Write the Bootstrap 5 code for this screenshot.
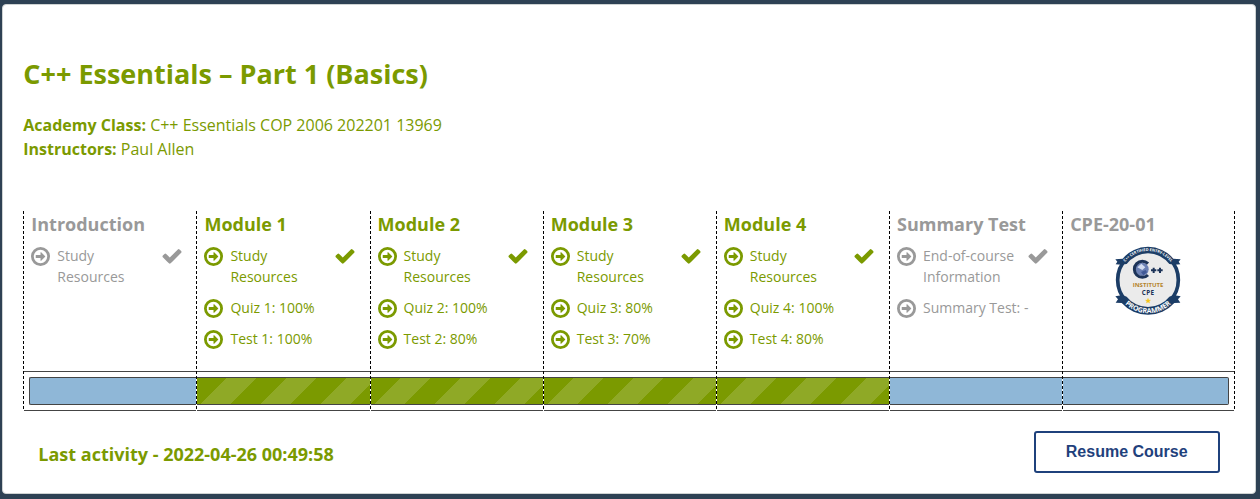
<!DOCTYPE html>
<html lang="en">
<head>
<meta charset="utf-8">
<meta name="viewport" content="width=device-width, initial-scale=1">
<title>C++ Essentials – Part 1 (Basics)</title>
<link href="https://cdn.jsdelivr.net/npm/bootstrap@5.3.0/dist/css/bootstrap.min.css" rel="stylesheet">
<style>
  :root { --olive: #7b9a00; --muted: #999; --navy: #1f417c; }
  body { background: #2e4154; font-family: "Open Sans", "Noto Sans", sans-serif; color: var(--olive); height: 499px; overflow: hidden; padding: 4px 4px 5px 2px; }
  .course { height: 490px; border: 1px solid #cfd3d3; border-radius: 4px; color: inherit; padding: 0 20.3px; }
  .course-title { font-size: 27px; font-weight: 700; line-height: 36px; margin: 51px 0 21px; }
  .meta { font-size: 16px; line-height: 24px; }
  .track { margin-top: 50px; height: 200px; width: 1212px; display: grid; grid-template-columns: repeat(7, 1fr); }
  .module { display: flex; flex-direction: column; min-width: 0; position: relative; }
  .module::before, .module:last-child::after { content: ""; position: absolute; top: 0; bottom: 0; width: 1px; left: 0; background: repeating-linear-gradient(#000 0 3px, #fff 3px 5px); }
  .module:last-child::after { left: auto; right: 0; }
  .module h2 { font-size: 18px; font-weight: 700; line-height: 26px; margin: 0 0 8px; padding-left: 8px; white-space: nowrap; }
  .pending { color: var(--muted); }
  .step { font-size: 14px; line-height: 21px; padding-left: 8px; margin-bottom: 10px; }
  .step .ring { width: 19px; height: 19px; margin: 2px 7px 0 0; flex: none; }
  .step .label { width: 101px; white-space: nowrap; }
  .step .tick { width: 22px; height: 22px; margin: 0 0 0 2.5px; flex: none; }
  .meter { margin-top: auto; height: 40px; border-top: 1px solid #444; border-bottom: 1px solid #444; padding: 5px 0; }
  .fill { height: 28px; background: #8fb7d7; border: 1px solid #444; border-width: 1px 0; }
  .module:first-child .fill { margin-left: 6px; border-left-width: 1px; border-radius: 2px 0 0 2px; }
  .module:last-child .fill { margin-right: 6px; border-right-width: 1px; border-radius: 0 2px 2px 0; }
  .fill.done { background: linear-gradient(135deg, transparent 25%, rgba(255,255,255,.15) 25% 50%, transparent 50% 75%, rgba(255,255,255,.15) 75%) 1px 0 / 60px 60px var(--olive); }
  .seal { display: block; width: 72px; height: 72px; margin: -1px 0 0 50px; }
  .course-foot { margin-top: 20px; padding: 0 15px; }
  .last { font-size: 18px; font-weight: 700; line-height: 26px; padding-top: 4px; }
  .resume { font-family: "Liberation Sans", Arial, sans-serif; font-size: 16px; font-weight: 700; width: 186px; height: 42px; border: 2px solid var(--navy); color: var(--navy); border-radius: 3px; padding: 0; }
</style>
</head>
<body>
<svg class="d-none">
  <symbol id="go" viewBox="0 0 1536 1536"><circle cx="768" cy="768" r="656" fill="none" stroke="currentColor" stroke-width="224"/><path fill="currentColor" d="M1152 768q0 14-9 23l-320 320q-9 9-23 9-13 0-22.500-9.500t-9.500-22.500v-192h-352q-13 0-22.500-9.500t-9.500-22.500v-192q0-13 9.500-22.500t22.500-9.500h352v-192q0-14 9-23t23-9q12 0 24 10l319 319q9 9 9 23z"/></symbol>
  <symbol id="tick" viewBox="0 0 1792 1792"><path fill="currentColor" d="M1671 566q0 40-28 68l-724 724-136 136q-28 28-68 28t-68-28l-136-136-362-362q-28-28-28-68t28-68l136-136q28-28 68-28t68 28l294 295 656-657q28-28 68-28t68 28l136 136q28 28 28 68z"/></symbol>
</svg>
<main class="card course">
  <h1 class="course-title">C++ Essentials – Part 1 (Basics)</h1>
  <div class="meta"><b>Academy Class:</b> C++ Essentials COP 2006 202201 13969</div>
  <div class="meta"><b>Instructors:</b> Paul Allen</div>
  <section class="track">
    <div class="module pending"><h2>Introduction</h2>
      <div class="step d-flex"><svg class="ring"><use href="#go"/></svg><span class="label">Study<br>Resources</span><svg class="tick"><use href="#tick"/></svg></div>
      <div class="meter"><div class="fill"></div></div></div>
    <div class="module"><h2>Module 1</h2>
      <div class="step d-flex"><svg class="ring"><use href="#go"/></svg><span class="label">Study<br>Resources</span><svg class="tick"><use href="#tick"/></svg></div>
      <div class="step d-flex"><svg class="ring"><use href="#go"/></svg><span class="label">Quiz 1: 100%</span></div>
      <div class="step d-flex"><svg class="ring"><use href="#go"/></svg><span class="label">Test 1: 100%</span></div>
      <div class="meter"><div class="fill done"></div></div></div>
    <div class="module"><h2>Module 2</h2>
      <div class="step d-flex"><svg class="ring"><use href="#go"/></svg><span class="label">Study<br>Resources</span><svg class="tick"><use href="#tick"/></svg></div>
      <div class="step d-flex"><svg class="ring"><use href="#go"/></svg><span class="label">Quiz 2: 100%</span></div>
      <div class="step d-flex"><svg class="ring"><use href="#go"/></svg><span class="label">Test 2: 80%</span></div>
      <div class="meter"><div class="fill done"></div></div></div>
    <div class="module"><h2>Module 3</h2>
      <div class="step d-flex"><svg class="ring"><use href="#go"/></svg><span class="label">Study<br>Resources</span><svg class="tick"><use href="#tick"/></svg></div>
      <div class="step d-flex"><svg class="ring"><use href="#go"/></svg><span class="label">Quiz 3: 80%</span></div>
      <div class="step d-flex"><svg class="ring"><use href="#go"/></svg><span class="label">Test 3: 70%</span></div>
      <div class="meter"><div class="fill done"></div></div></div>
    <div class="module"><h2>Module 4</h2>
      <div class="step d-flex"><svg class="ring"><use href="#go"/></svg><span class="label">Study<br>Resources</span><svg class="tick"><use href="#tick"/></svg></div>
      <div class="step d-flex"><svg class="ring"><use href="#go"/></svg><span class="label">Quiz 4: 100%</span></div>
      <div class="step d-flex"><svg class="ring"><use href="#go"/></svg><span class="label">Test 4: 80%</span></div>
      <div class="meter"><div class="fill done"></div></div></div>
    <div class="module pending"><h2>Summary Test</h2>
      <div class="step d-flex"><svg class="ring"><use href="#go"/></svg><span class="label">End-of-course<br>Information</span><svg class="tick"><use href="#tick"/></svg></div>
      <div class="step d-flex"><svg class="ring"><use href="#go"/></svg><span class="label">Summary Test: -</span></div>
      <div class="meter"><div class="fill"></div></div></div>
    <div class="module pending"><h2>CPE-20-01</h2>
      <svg class="seal" viewBox="0 0 216 216" font-family="Open Sans, sans-serif" font-weight="700">
        <circle cx="108" cy="108" r="91" fill="#ebebeb" stroke="#1c3d66" stroke-width="11"/>
        <!-- ribbon tails and bands -->
        <path fill="#1c3d66" d="M10 46L32 44A99 99 0 0 1 184 44L206 46L200 53L205 61L188 62L172 60A80 80 0 0 0 44 60L28 62L11 61L16 53Z"/>
        <path fill="#1c3d66" d="M10 157L32 153L44 158A81 81 0 0 0 172 158L184 153L206 157L198 166L205 176L187 177A106 106 0 0 1 29 177L11 176L18 166Z"/>
        <path id="seal-top" fill="none" d="M36 59A87 87 0 0 1 180 59"/>
        <path id="seal-bottom" fill="none" d="M31 171A99 99 0 0 0 185 171"/>
        <text font-size="11.500" fill="#fff"><textPath href="#seal-top" startOffset="50%" text-anchor="middle">C++ CERTIFIED ENTRY-LEVEL</textPath></text>
        <text font-size="21" fill="#fff"><textPath href="#seal-bottom" startOffset="50%" text-anchor="middle">PROGRAMMER</textPath></text>
        <circle cx="90" cy="76" r="20" fill="#6b80b4"/><path d="M76 70L88 59L100 70L91 78Z" fill="#d3ddf0"/><path d="M87 84L101 78L105 85L94 94Z" fill="#415996"/>
        <path d="M108 59A24 24 0 1 0 108 93" fill="none" stroke="#1c3358" stroke-width="9"/>
        <path d="M117 79h16M125 71v16M136 79h16M144 71v16" stroke="#1c3358" stroke-width="6"/>
        <text x="108" y="129" font-size="18" text-anchor="middle" textLength="92" fill="#b5842a">INSTITUTE</text>
        <text x="108" y="153" font-size="19" text-anchor="middle" textLength="37" fill="#1c3358">CPE</text>
        <path d="M108 163l2.200 5 5.300.500-4 3.500 1.200 5-4.700-2.700-4.700 2.700 1.200-5-4-3.500 5.300-.500z" fill="#f7c518" stroke="#f7c518"/>
      </svg>
      <div class="meter"><div class="fill"></div></div></div>
  </section>
  <footer class="course-foot d-flex justify-content-between align-items-center">
    <div class="last">Last activity - 2022-04-26 00:49:58</div>
    <button class="btn resume">Resume Course</button>
  </footer>
</main>
<script src="https://cdn.jsdelivr.net/npm/bootstrap@5.3.0/dist/js/bootstrap.bundle.min.js"></script>
</body>
</html>
